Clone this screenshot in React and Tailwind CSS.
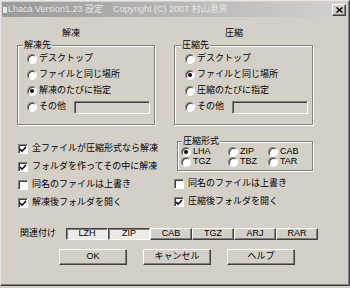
import React from "react";

// Win classic bevels
const raised =
  "border border-t-white border-l-white border-r-[#404040] border-b-[#404040] shadow-[inset_-1px_-1px_0_#808080]";
const sunken =
  "border border-t-[#808080] border-l-[#808080] border-r-white border-b-white shadow-[inset_1px_1px_0_#404040]";
const etched =
  "border border-[#808080] shadow-[inset_1px_1px_0_white,1px_1px_0_white]";

function Radio({ checked }) {
  return (
    <span className="flex items-center justify-center w-[10px] h-[10px] shrink-0 rounded-full bg-white border border-t-[#808080] border-l-[#808080] border-r-white border-b-white shadow-[inset_1px_1px_0_#404040]">
      {checked && <span className="w-[4px] h-[4px] rounded-full bg-black" />}
    </span>
  );
}

function Check({ checked }) {
  return (
    <span className={`flex items-center justify-center w-[10px] h-[10px] shrink-0 bg-white ${sunken}`}>
      {checked && (
        <svg width="8" height="7" viewBox="0 0 8 7">
          <polyline points="1,3 3,5.2 7,1" fill="none" stroke="black" strokeWidth="1.6" />
        </svg>
      )}
    </span>
  );
}

function RadioRow({ label, checked, children }) {
  return (
    <div className="flex items-center h-[16px] gap-[2px] whitespace-nowrap">
      <Radio checked={checked} />
      <span>{label}</span>
      {children}
    </div>
  );
}

function CheckRow({ label, checked }) {
  return (
    <div className="flex items-center h-[18px] gap-[4px] whitespace-nowrap">
      <Check checked={checked} />
      <span>{label}</span>
    </div>
  );
}

function Destination({ title, prefix, selected, pad }) {
  const items = ["デスクトップ", "ファイルと同じ場所", `${prefix}のたびに指定`];
  return (
    <fieldset className={`${etched} pb-[9px] ${pad}`}>
      <legend className="-ml-[4px] px-[1px] leading-[12px] bg-[#d4d0c8]">{title}</legend>
      {items.map((t, i) => (
        <RadioRow key={t} label={t} checked={i === selected} />
      ))}
      <RadioRow label="その他" checked={false}>
        <span className={`ml-[6px] w-[76px] h-[13px] bg-[#d4d0c8] ${sunken}`} />
      </RadioRow>
    </fieldset>
  );
}

export default function App() {
  const formats = [
    ["LHA", true],
    ["ZIP", false],
    ["CAB", false],
    ["TGZ", false],
    ["TBZ", false],
    ["TAR", false],
  ];
  const assoc = [
    ["LZH", true],
    ["ZIP", true],
    ["CAB", false],
    ["TGZ", false],
    ["ARJ", false],
    ["RAR", false],
  ];

  return (
    <div className="w-[350px] h-[288px] bg-[#d4d0c8] text-[9px] text-black font-['Liberation_Sans','Noto_Sans_CJK_JP',sans-serif] overflow-hidden">
      <div className="h-[286px] border border-t-[#e8e8e8] border-l-[#e8e8e8] border-r-[#404040] border-b-[#404040] shadow-[inset_-1px_-1px_0_#808080] p-[1px]">
        {/* title bar */}
        <div className="flex items-center h-[15px] bg-gradient-to-r from-[#9a9a9a] to-[#d4d2d0] pl-[1px] pr-[2px]">
          <span className="w-[4px] h-[6px] bg-[#e8e8e8] mr-[1px]" />
          <span className="text-[#e6e6e6] whitespace-nowrap">
            Lhaca Version1.23 設定&nbsp;&nbsp;&nbsp;&nbsp;Copyright (C) 2007 村山恵男
          </span>
          <span className={`ml-auto flex items-center justify-center w-[14px] h-[12px] bg-[#d4d0c8] ${raised}`}>
            <svg width="7" height="6" viewBox="0 0 7 6">
              <path d="M0.5 0.5L6.5 5.5M6.5 0.5L0.5 5.5" stroke="black" strokeWidth="1.5" />
            </svg>
          </span>
        </div>

        {/* two columns */}
        <div className="flex pl-[15px] mt-[10px] gap-[19px]">
          <div className="w-[138px]">
            <div className="h-[12px] leading-[12px] pl-[45px]">解凍</div>
            <Destination title="解凍先" prefix="解凍" selected={2} pad="pl-[9px]" />
            <div className="mt-[15px] pl-[1px]">
              <CheckRow label="全ファイルが圧縮形式なら解凍" checked />
              <CheckRow label="フォルダを作ってその中に解凍" checked />
              <CheckRow label="同名のファイルは上書き" checked={false} />
              <CheckRow label="解凍後フォルダを開く" checked />
            </div>
          </div>

          <div className="w-[139px]">
            <div className="h-[12px] leading-[12px] pl-[51px]">圧縮</div>
            <Destination title="圧縮先" prefix="圧縮" selected={1} pad="pl-[10px]" />
            <fieldset className={`${etched} ml-[3px] mt-[10px] pl-[3px] pb-[3px]`}>
              <legend className="ml-[1px] px-[1px] leading-[12px] bg-[#d4d0c8]">圧縮形式</legend>
              <div className="grid grid-cols-[47px_40px_1fr]">
                {formats.map(([f, on]) => (
                  <div key={f} className="flex items-center h-[10px] gap-[2px]">
                    <Radio checked={on} />
                    <span>{f}</span>
                  </div>
                ))}
              </div>
            </fieldset>
            <div className="mt-[4px]">
              <CheckRow label="同名のファイルは上書き" checked={false} />
              <CheckRow label="圧縮後フォルダを開く" checked />
            </div>
          </div>
        </div>

        {/* association */}
        <div className="flex items-center mt-[15px] pl-[18px]">
          <span className="w-[46px]">関連付け</span>
          <div className="flex">
            {assoc.map(([a, on]) => (
              <span
                key={a}
                className={`flex items-center justify-center w-[42px] h-[12px] ${
                  on
                    ? "bg-[#ecebe8] border border-t-[#404040] border-l-[#404040] border-r-white border-b-white shadow-[inset_1px_1px_0_#808080]"
                    : `bg-[#d4d0c8] ${raised}`
                }`}
              >
                {a}
              </span>
            ))}
          </div>
        </div>

        {/* buttons */}
        <div className="flex gap-[16px] pl-[57px] mt-[8px]">
          {["OK", "キャンセル", "ヘルプ"].map((b) => (
            <span key={b} className={`flex items-center justify-center w-[68px] h-[16px] bg-[#d4d0c8] ${raised}`}>
              {b}
            </span>
          ))}
        </div>
      </div>
    </div>
  );
}
